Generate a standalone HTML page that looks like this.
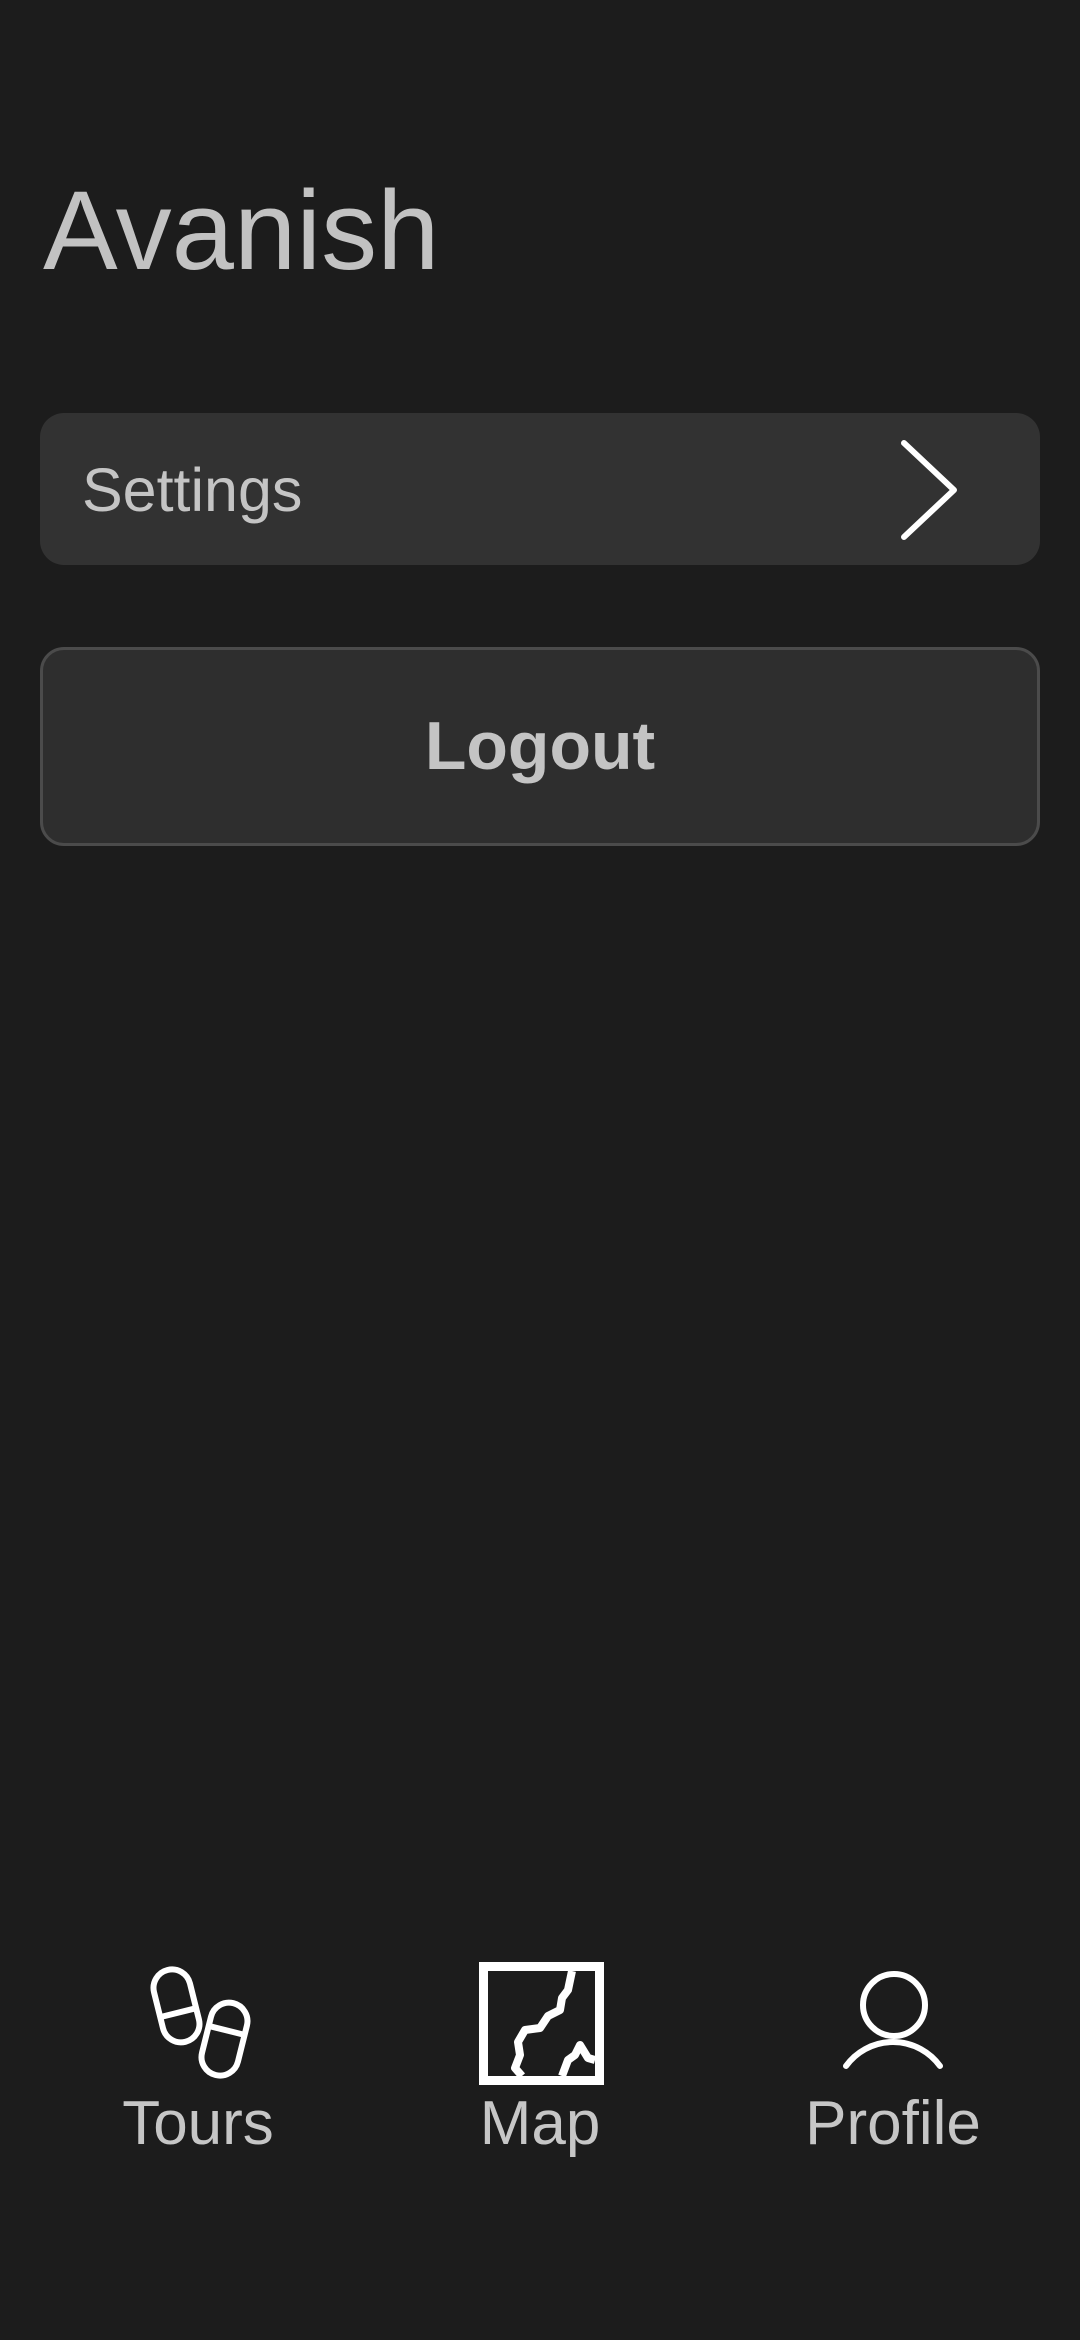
<!DOCTYPE html>
<html><head><meta charset="utf-8"><style>
html,body{margin:0;padding:0;background:#1c1c1c;width:1080px;height:2340px;overflow:hidden;font-family:"Liberation Sans",sans-serif}
.t{position:absolute;left:43px;top:175px;font-size:112px;color:#c2c2c2;line-height:1}
.card{position:absolute;left:40px;top:413px;width:1000px;height:152px;background:#323232;border-radius:24px}
.card span{position:absolute;left:42px;top:47px;font-size:61px;color:#c4c4c4;line-height:1}
.btn{position:absolute;left:40px;top:647px;width:994px;height:193px;background:#2e2e2e;border:3px solid #4b4b4b;border-radius:24px;text-align:center;line-height:193px;font-size:68px;font-weight:bold;color:#c4c4c4}
.lbl{position:absolute;top:2093px;font-size:62px;color:#c6c6c6;line-height:1;width:300px;text-align:center}
</style></head><body>
<div class="t">Avanish</div>
<div class="card"><span>Settings</span>
<svg style="position:absolute;left:0;top:0" width="1000" height="152"><path d="M864 30 L914 77 L864 124" fill="none" stroke="#fff" stroke-width="6" stroke-linecap="round" stroke-linejoin="round"/></svg></div>
<div class="btn">Logout</div>
<svg style="position:absolute;left:0;top:0" width="1080" height="2340">
<g fill="none" stroke="#fff" stroke-width="6">
<g transform="rotate(-14 176 2006)"><rect x="158" y="1969" width="37" height="74" rx="18.5"/><line x1="158" y1="2013" x2="195" y2="2013"/></g>
<g transform="rotate(14 224 2039)"><rect x="206" y="2002" width="37" height="74" rx="18.5"/><line x1="206" y1="2030" x2="243" y2="2030"/></g>
<circle cx="894" cy="2005" r="31"/>
<path d="M846 2066 A58 58 0 0 1 940 2066" stroke-linecap="round"/>
</g>
<rect x="479" y="1962" width="125" height="123" fill="#fff"/>
<rect x="488" y="1971" width="107" height="105" fill="#1c1c1c"/>
<path d="M572 1971 L568 1990 L562 1998 L560 2010 L548 2016 L540 2028 L525 2030 L518 2042 L520 2055 L515 2068 L522 2076 M562 2076 L568 2060 L575 2055 L580 2045 L588 2058 L595 2060" fill="none" stroke="#fff" stroke-width="8" stroke-linejoin="round"/>
</svg>
<div class="lbl" style="left:48px">Tours</div>
<div class="lbl" style="left:390px">Map</div>
<div class="lbl" style="left:743px">Profile</div>
</body></html>
